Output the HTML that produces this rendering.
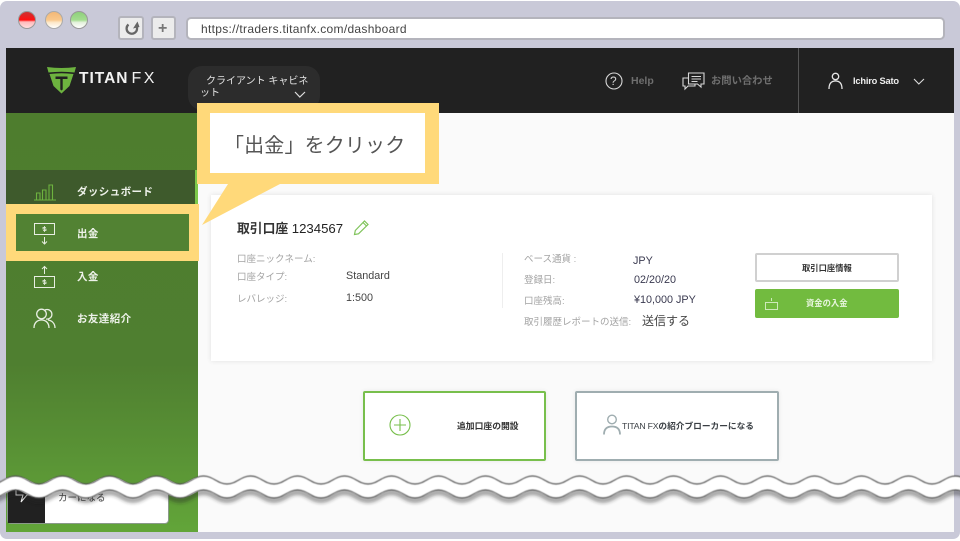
<!DOCTYPE html>
<html lang="ja"><head><meta charset="utf-8"><title>Titan FX</title>
<style>
*{box-sizing:border-box}
html,body{margin:0;padding:0;background:#fff;overflow:hidden}
body{width:960px;height:541px;position:relative;overflow:hidden;font-family:"Liberation Sans","Noto Sans CJK JP",sans-serif}
.a{position:absolute;white-space:nowrap}
svg{position:absolute;overflow:visible}
svg.clip{overflow:hidden}
.lb{font-size:9.5px;color:#a3a3a3;line-height:12px}
.v{font-size:10.8px;color:#444;line-height:13px}
.s{font-size:10.5px;font-weight:700;color:#eef2ea;line-height:14px;letter-spacing:.4px}
</style></head><body>
<div class="a" style="left:0;top:1px;width:960px;height:538px;background:#c9c9d8;border-radius:7px"></div>
<!-- traffic lights -->
<div class="a" style="left:18px;top:11px;width:18px;height:18px;border-radius:50%;border:1.500px solid #999;background:linear-gradient(#c33 0,#f11 50%,#fbb 62%,#fdd 100%)"></div>
<div class="a" style="left:45px;top:11px;width:18px;height:18px;border-radius:50%;border:1.500px solid #aaa;background:linear-gradient(#f3b877 0,#f9c88c 50%,#fde8c8 65%,#fff 100%)"></div>
<div class="a" style="left:70px;top:11px;width:18px;height:18px;border-radius:50%;border:1.500px solid #999;background:linear-gradient(#8ed07c 0,#a4dc90 50%,#e4f2dc 65%,#fff 100%)"></div>
<!-- browser buttons -->
<div class="a" style="left:118px;top:16px;width:26px;height:24px;background:#ececec;border:2px solid #b4b4bc;border-radius:3px"></div>
<svg style="left:125px;top:20px" width="15" height="15" viewBox="0 0 15 15"><path d="M3.500 4.500A5.200 5.200 0 1 0 12 8V4" fill="none" stroke="#666" stroke-width="2.300"/><path d="M8 8.500L12.500 1.500L14.500 7z" fill="#666"/></svg>
<div class="a" style="left:151px;top:16px;width:25px;height:24px;background:#ececec;border:2px solid #b4b4bc;border-radius:3px"></div>
<div class="a" style="left:158px;top:21px;font-size:16px;line-height:16px;font-weight:700;color:#777">+</div>
<div class="a" style="left:186px;top:17px;width:759px;height:23px;background:#fff;border:2px solid #b4b4bc;border-radius:5px"></div>
<div class="a" style="left:201px;top:22px;font-size:12px;line-height:15px;color:#444;letter-spacing:.3px">https://traders.titanfx.com/dashboard</div>

<!-- page -->
<div class="a" style="left:6px;top:48px;width:948px;height:484px;background:#fafafa"></div>
<div class="a" style="left:6px;top:48px;width:948px;height:65px;background:#212121"></div>
<div class="a" style="left:798px;top:48px;width:1px;height:65px;background:#555"></div>
<!-- logo -->
<svg style="left:47px;top:67px" width="29" height="27" viewBox="0 0 29 27"><path d="M0 0Q14.500 2 29 0L27.500 5.500Q14.500 4 1.500 5.500z M2.500 7Q14.500 5.500 26.500 7L22.500 19L14.500 26.500L6.500 19z" fill="#6db33f"/><path d="M8.500 9.500h12v2.500h-4.800v10.500l-1.200 1-1.200-1V12H8.500z" fill="#212121"/></svg>
<div class="a" style="left:79px;top:70px;font-size:15.500px;line-height:18px;font-weight:700;color:#f2f2f2;letter-spacing:1px">TITAN<span style="font-weight:400;font-size:16px;margin-left:3px;letter-spacing:2.500px">FX</span></div>
<!-- client cabinet -->
<div class="a" style="left:188px;top:66px;width:132px;height:44px;background:#2c2c2c;border-radius:14px"></div>
<div class="a" style="left:206px;top:76px;font-size:10px;line-height:12px;color:#e2e2e2">クライアント キャビネ</div>
<div class="a" style="left:200px;top:88px;font-size:10px;line-height:12px;color:#e2e2e2">ット</div>
<svg style="left:294px;top:91px" width="12" height="8"><path d="M1 1l4.800 5L11 1" fill="none" stroke="#ddd" stroke-width="1.200"/></svg>
<!-- header right -->
<svg style="left:605px;top:72px" width="18" height="18"><circle cx="9" cy="9" r="8" fill="none" stroke="#d8d8d8" stroke-width="1.100"/></svg>
<div class="a" style="left:610px;top:74px;font-size:12px;line-height:14px;color:#d8d8d8">?</div>
<div class="a" style="left:631px;top:74px;font-size:10.500px;line-height:14px;font-weight:700;color:#6f6f6f">Help</div>
<svg style="left:682px;top:72px" width="23" height="19" viewBox="0 0 23 19" fill="none" stroke="#d8d8d8" stroke-width="1.100"><path d="M6.500 1h15.500v11h-3v3l-3.500-3H6.500z"/><path d="M6 6H1v8h2v3l3-3h7v-2"/><path d="M9.500 4.500h9.500M9.500 7h9.500M9.500 9.500h6"/></svg>
<div class="a" style="left:711px;top:75px;font-size:10.300px;line-height:14px;font-weight:700;color:#6f6f6f">お問い合わせ</div>
<svg style="left:828px;top:72px" width="15" height="18" viewBox="0 0 15 18" fill="none" stroke="#e5e5e5" stroke-width="1.300"><circle cx="7.500" cy="4.500" r="3.200"/><path d="M1 17c0-5 2-8 6.500-8s6.500 3 6.500 8"/></svg>
<div class="a" style="left:853px;top:75px;font-size:9.300px;line-height:13px;font-weight:700;color:#eee;letter-spacing:-.2px">Ichiro Sato</div>
<svg style="left:913px;top:78px" width="12" height="8"><path d="M1 1l4.800 5L11 1" fill="none" stroke="#ddd" stroke-width="1.100"/></svg>

<!-- sidebar -->
<div class="a" style="left:6px;top:113px;width:192px;height:419px;background:linear-gradient(#4e7d2e 0,#4f7f30 60%,#5b9636 85%,#62a539 100%)"></div>
<div class="a" style="left:6px;top:170px;width:192px;height:34px;background:#3e5a2c"></div>
<div class="a" style="left:195px;top:170px;width:3px;height:34px;background:#7cc84a"></div>
<svg style="left:34px;top:183px" width="23" height="18" viewBox="0 0 23 18" fill="none" stroke="#6db33f" stroke-width="1.100"><path d="M0 17h22"/><path d="M2.500 17v-7h3.500v7M8.500 17V7h3.500v10M15 17V2h3.500v15"/></svg>
<div class="a s" style="left:77px;top:185px">ダッシュボード</div>

<div class="a" style="left:6px;top:204px;width:193px;height:57px;background:#ffd97a"></div>
<div class="a" style="left:16px;top:214px;width:173px;height:37px;background:#528233"></div>
<svg style="left:33px;top:223px" width="23" height="22" viewBox="0 0 23 22" fill="none" stroke="#e8eee2" stroke-width="1"><rect x="1.500" y=".5" width="20" height="11"/><path d="M11.500 14v7M9 18.500l2.500 2.500 2.500-2.500"/><path d="M11.500 3v6M13 4.500h-3v1.500h3v1.500h-3" stroke-width=".8"/></svg>
<div class="a s" style="left:77px;top:227px">出金</div>

<svg style="left:33px;top:265px" width="23" height="23" viewBox="0 0 23 23" fill="none" stroke="#e8eee2" stroke-width="1"><rect x="1.500" y="11.500" width="20" height="11"/><path d="M11.500 9V1.500M9 4l2.500-2.500L14 4"/><path d="M11.500 14v6M13 15.500h-3v1.500h3v1.500h-3" stroke-width=".8"/></svg>
<div class="a s" style="left:77px;top:270px">入金</div>

<svg style="left:33px;top:308px" width="23" height="21" viewBox="0 0 23 21" fill="none" stroke="#e8eee2" stroke-width="1.300"><circle cx="8.500" cy="6" r="4.800"/><path d="M12 2a4.800 4.800 0 1 1 1 9"/><path d="M1 20c0-5 3-8 7.500-8s7.500 3 7.500 8"/><path d="M15 12c4 .5 7 3.500 7 8"/></svg>
<div class="a s" style="left:77px;top:312px">お友達紹介</div>

<!-- bottom sidebar btn -->
<div class="a" style="left:7px;top:486px;width:162px;height:38px;background:#fff;border:1px solid #8a9a8a;border-radius:0 0 4px 4px"></div>
<div class="a" style="left:8px;top:486px;width:37px;height:37px;background:#212121"></div>
<svg style="left:15px;top:490px" width="20" height="14" fill="none" stroke="#eee" stroke-width="1"><path d="M1 0v5h7l-2 7 6-7h6"/></svg>
<div class="a" style="left:58px;top:492px;font-size:9.500px;line-height:14px;color:#444">カーになる</div>

<!-- card -->
<div class="a" style="left:211px;top:195px;width:721px;height:166px;background:#fff;box-shadow:0 0 5px rgba(0,0,0,.1)"></div>
<div class="a" style="left:237px;top:221px;font-size:12.800px;line-height:15px;font-weight:700;color:#333">取引口座 <span style="font-weight:400;color:#222;font-size:13.200px">1234567</span></div>
<svg style="left:353px;top:219px" width="17" height="17" viewBox="0 0 17 17" fill="none" stroke="#7fc35a" stroke-width="1.200"><path d="M1.500 15.500l.8-4L11.500 2l3.500 3.500-9.500 9.300zM10 3.500l3.500 3.500"/></svg>
<div class="a lb" style="left:237px;top:254px">口座ニックネーム:</div>
<div class="a lb" style="left:237px;top:272px">口座タイプ:</div>
<div class="a v" style="left:346px;top:270px">Standard</div>
<div class="a lb" style="left:237px;top:294px">レバレッジ:</div>
<div class="a v" style="left:346px;top:292px">1:500</div>
<div class="a" style="left:502px;top:253px;width:1px;height:55px;background:#eee"></div>
<div class="a lb" style="left:524px;top:254px">ベース通貨 :</div>
<div class="a v" style="left:633px;top:255px;color:#3a3a50">JPY</div>
<div class="a lb" style="left:524px;top:275px">登録日:</div>
<div class="a v" style="left:634px;top:274px;color:#3a3a50">02/20/20</div>
<div class="a lb" style="left:524px;top:296px">口座残高:</div>
<div class="a v" style="left:634px;top:294px;color:#3a3a50">¥10,000 JPY</div>
<div class="a lb" style="left:524px;top:317px">取引履歴レポートの送信:</div>
<div class="a" style="left:642px;top:314px;font-size:12px;line-height:15px;color:#444">送信する</div>
<div class="a" style="left:755px;top:253px;width:144px;height:29px;background:#fff;border:2px solid #d0d0d0;border-radius:2px"></div>
<div class="a" style="left:802px;top:262px;font-size:8.300px;line-height:13px;font-weight:700;color:#333">取引口座情報</div>
<div class="a" style="left:755px;top:289px;width:144px;height:29px;background:#72bb3f;border-radius:2px"></div>
<svg style="left:765px;top:297px" width="13" height="13" fill="none" stroke="#d8efc8" stroke-width=".9"><rect x=".5" y="5.500" width="12" height="7"/><path d="M6.500 4V1"/></svg>
<div class="a" style="left:806px;top:297px;font-size:8.300px;line-height:13px;font-weight:700;color:#e9f6df">資金の入金</div>

<!-- bottom boxes -->
<div class="a" style="left:363px;top:391px;width:183px;height:70px;background:#fff;border:2px solid #78bf4c;border-radius:2px;box-shadow:0 0 5px rgba(0,0,0,.08)"></div>
<svg style="left:389px;top:414px" width="22" height="22" fill="none" stroke="#78bf4c" stroke-width="1.100"><circle cx="11" cy="11" r="10"/><path d="M11 5v12M5 11h12"/></svg>
<div class="a" style="left:457px;top:419px;font-size:8.800px;line-height:14px;font-weight:700;color:#333">追加口座の開設</div>
<div class="a" style="left:575px;top:391px;width:204px;height:70px;background:#fff;border:2px solid #9fadb0;border-radius:2px;box-shadow:0 0 5px rgba(0,0,0,.08)"></div>
<svg style="left:603px;top:414px" width="18" height="21" fill="none" stroke="#9fadb0" stroke-width="1.400"><circle cx="9" cy="5.500" r="4.300"/><path d="M1 20.500c0-5.500 3-8 8-8s8 2.500 8 8" stroke-width="1.800"/></svg>
<div class="a" style="left:622px;top:419px;font-size:8.700px;line-height:14px;font-weight:700;color:#3a3f44"><span style="font-weight:400;letter-spacing:-.2px">TITAN FX</span>の紹介ブローカーになる</div>

<!-- wave tear -->
<svg class="clip" style="left:0;top:0" width="960" height="541" viewBox="0 0 960 541">
<defs>
<path id="w" d="M-8 0c9.400 0 14.100-8 23.500-8s14.100 8 23.500 8 s14.100-8 23.500-8s14.100 8 23.500 8 s14.100-8 23.500-8s14.100 8 23.500 8
s14.100-8 23.500-8s14.100 8 23.500 8 s14.100-8 23.500-8s14.100 8 23.500 8 s14.100-8 23.500-8s14.100 8 23.500 8
s14.100-8 23.500-8s14.100 8 23.500 8 s14.100-8 23.500-8s14.100 8 23.500 8 s14.100-8 23.500-8s14.100 8 23.500 8
s14.100-8 23.500-8s14.100 8 23.500 8 s14.100-8 23.500-8s14.100 8 23.500 8 s14.100-8 23.500-8s14.100 8 23.500 8
s14.100-8 23.500-8s14.100 8 23.500 8 s14.100-8 23.500-8s14.100 8 23.500 8 s14.100-8 23.500-8s14.100 8 23.500 8
s14.100-8 23.500-8s14.100 8 23.500 8 s14.100-8 23.500-8s14.100 8 23.500 8 s14.100-8 23.500-8s14.100 8 23.500 8
s14.100-8 23.500-8s14.100 8 23.500 8 s14.100-8 23.500-8s14.100 8 23.500 8 s14.100-8 23.500-8s14.100 8 23.500 8"/>
<filter id="b" x="-5%" y="-100%" width="110%" height="400%"><feGaussianBlur stdDeviation="2"/></filter>
<filter id="c" x="-5%" y="-100%" width="110%" height="400%"><feGaussianBlur stdDeviation=".4"/></filter>
</defs>
<use href="#w" y="500.500" filter="url(#b)" opacity=".7" fill="none" stroke="#222" stroke-width="3"/>
<use href="#w" y="491" fill="none" stroke="#fff" stroke-width="13.500"/>
<use href="#w" y="484" filter="url(#c)" fill="none" stroke="#555" stroke-width="1.200"/>
<use href="#w" y="498" filter="url(#c)" fill="none" stroke="#555" stroke-width="1.200"/>
</svg>

<!-- callout -->
<svg style="left:0;top:0" width="960" height="541"><path d="M197 103H439V184H280L202 225L228 184H197z" fill="#ffd97a"/></svg>
<div class="a" style="left:210px;top:113px;width:215px;height:60px;background:#fff"></div>
<div class="a" style="left:224px;top:132px;font-size:20px;line-height:28px;color:#555;letter-spacing:.15px">「出金」をクリック</div>
</body></html>
